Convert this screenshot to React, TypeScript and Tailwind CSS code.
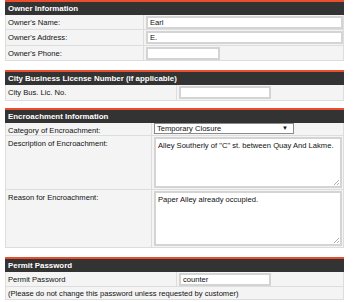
const font = { fontFamily: '"Liberation Sans", Arial, sans-serif' };

function Header({ title }: { title: string }) {
  return (
    <div className="border-t-2 border-[#ec4d2c]">
      <div className="h-[13px] bg-[#333333] px-[3px] text-[7.9px] font-bold leading-[13px] text-white">
        {title}
      </div>
    </div>
  );
}

function Row({
  label,
  labelW,
  h,
  children,
}: {
  label: string;
  labelW: string;
  h: string;
  children?: React.ReactNode;
}) {
  return (
    <div className={`flex border-b border-[#dddddd] bg-[#f4f4f4] ${h}`}>
      <div className={`${labelW} shrink-0 border-r border-[#dddddd] px-[2px] pt-[1px] text-[7.6px] leading-[13px] text-[#111]`}>
        {label}
      </div>
      <div className="flex-1 px-[2px] pt-[1px]">{children}</div>
    </div>
  );
}

function TextBox({ value, w }: { value: string; w: string }) {
  return (
    <div className={`${w} h-[13px] border-2 border-[#d4d4d4] bg-white px-[2px] text-[7.6px] leading-[9px] text-[#111]`}>
      {value}
    </div>
  );
}

function Area({ value, h }: { value: string; h: string }) {
  return (
    <div className={`relative w-[188px] ${h} border-2 border-[#d4d4d4] bg-white px-[2px] pt-[2px] text-[7.6px] leading-[10px] text-[#111]`}>
      {value}
      <svg className="absolute bottom-[1px] right-[1px]" width="6" height="6" viewBox="0 0 6 6">
        <path d="M6 1L1 6M6 4L4 6" stroke="#999" strokeWidth="0.8" />
      </svg>
    </div>
  );
}

export default function App() {
  return (
    <div className="h-[302px] w-[354px] overflow-hidden bg-white px-[5px]" style={font}>
      <div className="w-[339px]">
        {/* Owner */}
        <Header title="Owner Information" />
        <div className="border-x border-[#dddddd]">
          <Row label="Owner's Name:" labelW="w-[138px]" h="h-[15px]">
            <TextBox value="Earl" w="w-[197px]" />
          </Row>
          <Row label="Owner's Address:" labelW="w-[138px]" h="h-[16px]">
            <TextBox value="E." w="w-[197px]" />
          </Row>
          <Row label="Owner's Phone:" labelW="w-[138px]" h="h-[15px]">
            <TextBox value="" w="w-[74px]" />
          </Row>
        </div>

        <div className="h-[9px]" />
        <Header title="City Business License Number (if applicable)" />
        <div className="border-x border-[#dddddd]">
          <Row label="City Bus. Lic. No." labelW="w-[171px]" h="h-[16px]">
            <TextBox value="" w="w-[92px]" />
          </Row>
        </div>

        <div className="h-[7px]" />
        <Header title="Encroachment Information" />
        <div className="border-x border-[#dddddd]">
          <Row label="Category of Encroachment:" labelW="w-[146px]" h="h-[13px]">
            <div className="relative -mt-[1px] h-[11px] w-[140px] border border-[#8a8a8a] bg-white pl-[2px] text-[7.6px] leading-[9px] text-[#111]">
              Temporary Closure
              <span className="absolute right-[5px] top-[1px] text-[6px] leading-[7px]">▼</span>
            </div>
          </Row>
          <Row label="Description of Encroachment:" labelW="w-[146px]" h="h-[54px]">
            <Area value='Alley Southerly of "C" st. between Quay And Lakme.' h="h-[51px]" />
          </Row>
          <Row label="Reason for Encroachment:" labelW="w-[146px]" h="h-[58px]">
            <Area value="Paper Alley already occupied." h="h-[55px]" />
          </Row>
        </div>

        <div className="h-[9px]" />
        <Header title="Permit Password" />
        <div className="border-x border-[#dddddd]">
          <Row label="Permit Password" labelW="w-[171px]" h="h-[15px]">
            <TextBox value="counter" w="w-[92px]" />
          </Row>
          <div className="h-[13px] border-b border-[#dddddd] bg-[#f4f4f4] px-[2px] text-[7.6px] leading-[13px] text-[#111]">
            (Please do not change this password unless requested by customer)
          </div>
        </div>
      </div>
    </div>
  );
}
